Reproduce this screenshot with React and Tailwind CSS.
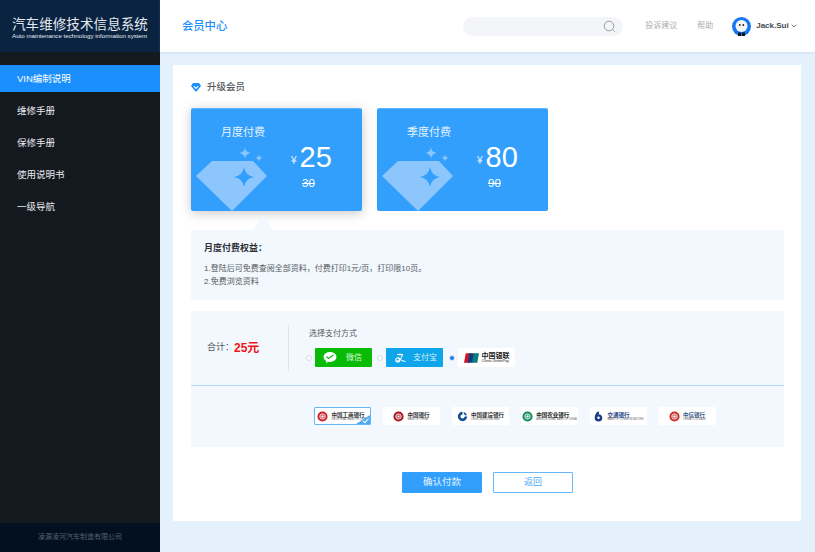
const font = { fontFamily: '"Liberation Sans", "Noto Sans CJK SC", sans-serif' };

const navItems = ['VIN编制说明', '维修手册', '保修手册', '使用说明书', '一级导航'];

function Star({ cx, cy, r, fill }) {
    const k = r * 0.14;
    return (
        <path
            fill={fill}
            d={`M${cx} ${cy - r}Q${cx + k} ${cy - k} ${cx + r} ${cy}Q${cx + k} ${cy + k} ${cx} ${cy + r}Q${cx - k} ${cy + k} ${cx - r} ${cy}Q${cx - k} ${cy - k} ${cx} ${cy - r}Z`}
        />
    );
}

function PriceCard({ title, price, oldPrice, active }) {
    return (
        <div className={`relative w-[171px] h-[103px] rounded-[2px] bg-[#339ffd] border-t border-[#5cb3fd] pt-[16px] text-white ${active ? 'shadow-[0_2px_12px_rgba(0,0,0,0.22)]' : ''}`}>
            <svg className="absolute left-0 top-0" width="171" height="103" viewBox="0 0 171 103">
                <polygon points="5,67 21,52 62,52 76,67 41,102" fill="#8cc6fd" />
                <Star cx={53} cy={68} r={10} fill="#339ffd" />
                <Star cx={54} cy={44} r={5.5} fill="#8cc6fd" />
                <Star cx={68} cy={49} r={3.5} fill="#8cc6fd" />
            </svg>
            <div className="relative pl-[30px] text-[11px] leading-[14px] text-[#e6f3ff]">{title}</div>
            <div className="relative ml-[100px] mt-[4px] flex items-end">
                <span className="text-[10px] leading-[12px] mb-[4px] mr-[3px] text-[#e6f3ff]">¥</span>
                <span className="text-[29px] leading-[28px]">{price}</span>
            </div>
            <div className="relative ml-[111px] mt-[5px] text-[11.5px] leading-[14px] line-through">{oldPrice}</div>
        </div>
    );
}

function Radio({ checked }) {
    return (
        <span className="w-[6px] h-[6px] rounded-full border border-[#d5dbe2] bg-white flex items-center justify-center shrink-0">
            {checked && <span className="w-[4px] h-[4px] rounded-full bg-[#1a7cf0]" />}
        </span>
    );
}

function BankEmblem({ color, kind }) {
    return (
        <svg width="11" height="11" viewBox="0 0 13 13" className="shrink-0">
            {kind === 'c' ? (
                <path d="M6.5 1a5.5 5.5 0 1 0 5.5 5.5H9a2.5 2.5 0 1 1-2.5-2.5zM8 1.2v2.2A3.5 3.5 0 0 1 9.6 5h2.2A5.5 5.5 0 0 0 8 1.2z" fill={color} />
            ) : kind === 'b' ? (
                <path d="M5 1h2.5L6.5 4A4 4 0 0 1 11 8a4.5 4.5 0 0 1-9 0c0-3 1.5-5 3-7zm1.5 5.5a1.5 1.5 0 1 0 0 3 1.5 1.5 0 0 0 0-3z" fill={color} />
            ) : (
                <>
                    <circle cx="6.5" cy="6.5" r="4.8" fill="none" stroke={color} strokeWidth="2.4" />
                    <rect x="4.7" y="4.7" width="3.6" height="3.6" fill="none" stroke={color} strokeWidth="1" />
                </>
            )}
        </svg>
    );
}

function BankLogo({ name, en, color, textColor, kind, selected }) {
    return (
        <div className={`relative w-[57px] h-[18px] rounded-[1px] bg-white flex items-center justify-center gap-[3px] ${selected ? 'border border-[#66b8f5]' : ''}`}>
            <BankEmblem color={color} kind={kind} />
            <div className="flex flex-col items-start">
                <span className="text-[5.5px] leading-[6px] font-bold whitespace-nowrap" style={{ color: textColor }}>{name}</span>
                <span className="text-[2.6px] leading-[3px] text-[#666] whitespace-nowrap">{en}</span>
            </div>
            {selected && (
                <svg className="absolute right-0 bottom-0" width="14" height="9" viewBox="0 0 14 9">
                    <polygon points="14,0 14,9 0,9" fill="#4fa9f0" />
                    <path d="M7 6l2 1.7L12.5 3.5" fill="none" stroke="#fff" strokeWidth="1.1" />
                </svg>
            )}
        </div>
    );
}

export default function App() {
    return (
        <div style={font} className="flex h-screen w-full overflow-hidden bg-[#e4f1fd]">
            {/* sidebar */}
            <aside className="w-[160px] shrink-0 flex flex-col bg-[#14181f]">
                <div className="h-[52px] bg-[#0a2341] pl-[12px] pt-[17px] text-[#e4e9ef]">
                    <div className="text-[13.6px] leading-[15px] whitespace-nowrap">汽车维修技术信息系统</div>
                    <div className="text-[6.2px] leading-[7px] whitespace-nowrap">Auto maintenance technology information system</div>
                </div>
                <nav className="flex-1 pt-[13px] flex flex-col gap-[5px]">
                    {navItems.map((item, i) => (
                        <div key={item} className={`h-[27px] pl-[17px] pt-[2px] flex items-center text-[9.5px] ${i === 0 ? 'bg-[#1a8efb] text-white' : 'text-[#e8ebef]'}`}>
                            {item}
                        </div>
                    ))}
                </nav>
                <div className="h-[29px] bg-[#03101f] flex items-center justify-center text-[7px] text-[#56606c]">
                    凌源凌河汽车制造有限公司
                </div>
            </aside>

            <div className="flex-1 min-w-0 flex flex-col">
                {/* header */}
                <header className="h-[52px] shrink-0 bg-white shadow-[0_1px_2px_rgba(120,170,220,0.25)] flex items-center pl-[22px]">
                    <div className="text-[11.3px] font-medium text-[#1a8efb]">会员中心</div>
                    <div className="ml-[236px] w-[160px] h-[19px] rounded-full bg-[#f3f5f9] flex items-center justify-end pr-[7px]">
                        <svg width="13" height="13" viewBox="0 0 13 13" fill="none" stroke="#8f959c" strokeWidth="0.9">
                            <circle cx="6" cy="6" r="4.8" />
                            <path d="M9.6 9.6l2.2 2.2" />
                        </svg>
                    </div>
                    <div className="ml-[22px] text-[8px] text-[#aaadb2]">投诉建议</div>
                    <div className="ml-[20px] text-[8px] text-[#aaadb2]">帮助</div>
                    <svg className="ml-[19px]" width="19" height="19" viewBox="0 0 19 19">
                        <circle cx="9.5" cy="9.5" r="9.5" fill="#1677f0" />
                        <circle cx="9.5" cy="9" r="6" fill="#f4f6f8" />
                        <circle cx="7.7" cy="8" r="0.9" fill="#222" />
                        <circle cx="11.3" cy="8" r="0.9" fill="#222" />
                        <path d="M6 19v-3.6h3V19zM10 19v-3.6h3V19z" fill="#111" />
                    </svg>
                    <div className="ml-[5px] text-[8px] font-bold text-[#444a52]">Jack.Sui</div>
                    <svg className="ml-[2px]" width="6" height="4" viewBox="0 0 6 4" fill="none" stroke="#555" strokeWidth="0.8">
                        <path d="M0.7 0.8L3 3l2.3-2.2" />
                    </svg>
                </header>

                {/* content */}
                <main className="flex-1 pl-[13px] pr-[14px] pt-[13px] pb-[31px]">
                    <div className="h-full bg-white pl-[18px] pr-[17px] pt-[15px]">
                        <div className="flex items-center h-[14px] text-[9.5px] font-medium text-[#555a60]">
                            <svg width="10" height="9" viewBox="0 0 10 9" className="mr-[6px]">
                                <path d="M2 0h6l2 3-5 6-5-6z" fill="#1a8efb" />
                                <path d="M2.8 3.2L5 5.4l2.2-2.2" fill="none" stroke="#fff" strokeWidth="1.1" />
                            </svg>
                            升级会员
                        </div>

                        <div className="mt-[14px] flex gap-[15px]">
                            <PriceCard title="月度付费" price="25" oldPrice="30" active />
                            <PriceCard title="季度付费" price="80" oldPrice="90" />
                        </div>

                        <div className="relative mt-[19px] h-[70px] bg-[#f2f8fe] pl-[13px] pt-[11px] rounded-[1px]">
                            <div className="absolute left-[62px] top-[-14px] w-0 h-0 border-x-[10px] border-b-[14px] border-x-transparent border-b-[#f2f8fe]" />
                            <div className="text-[9px] leading-[14px] font-bold text-[#2c3036]">{'月度付费权益\uFF1A'}</div>
                            <div className="mt-[7px] text-[8px] leading-[13px] text-[#555a60]">{'1.登陆后可免费查阅全部资料\uFF0C付费打印1元/页\uFF0C打印限10页\u3002'}</div>
                            <div className="text-[8px] leading-[13px] text-[#555a60]">2.免费浏览资料</div>
                        </div>

                        <div className="mt-[11px] h-[136px] bg-[#f2f8fe] flex flex-col">
                            <div className="h-[75px] pb-[1px] flex items-center border-b border-[#b5dcf9]">
                                <div className="w-[97px] shrink-0 pl-[16px] pt-[1px] flex items-center text-[9px] text-[#555a60]">
                                    {'合计\uFF1A'}<span className="text-[12px] font-bold text-[#f01414]">25元</span>
                                </div>
                                <div className="w-px h-[46px] bg-[#dfe3e7] shrink-0" />
                                <div className="pl-[20px]">
                                    <div className="text-[8px] leading-[12px] text-[#555a60]">选择支付方式</div>
                                    <div className="mt-[8px] flex items-center -ml-[3px]">
                                        <Radio />
                                        <div className="ml-[3px] w-[57px] h-[19px] rounded-[1px] bg-[#09bb07] flex items-center pl-[8px] text-[8px] text-[#d8f5d8]">
                                            <svg width="14" height="11" viewBox="0 0 14 11">
                                                <ellipse cx="7" cy="5" rx="6.5" ry="5" fill="#fff" />
                                                <path d="M3.5 9l-0.5 2 3-1.2z" fill="#fff" />
                                                <path d="M3.5 4.5l2 2L10.5 3" fill="none" stroke="#09bb07" strokeWidth="1.1" />
                                            </svg>
                                            <span className="ml-[9px]">微信</span>
                                        </div>
                                        <span className="ml-[5px]"><Radio /></span>
                                        <div className="ml-[3px] w-[57px] h-[19px] rounded-[1px] bg-[#0ea5ea] flex items-center pl-[9px] text-[8px] text-[#d6effb]">
                                            <svg width="11" height="10" viewBox="0 0 11 10" fill="none" stroke="#fff" strokeWidth="1.1">
                                                <path d="M2 1.5h6M5 0.5v2M7.5 1.5C7 4.5 4.5 7.5 1 8.5M3 4c1.5 2 4 4 7.5 4.5" />
                                                <circle cx="2.8" cy="7" r="2" />
                                            </svg>
                                            <span className="ml-[7px]">支付宝</span>
                                        </div>
                                        <span className="ml-[6px]"><Radio checked /></span>
                                        <div className="ml-[3px] w-[57px] h-[19px] rounded-[1px] bg-white flex items-center justify-center gap-[3px]">
                                            <svg width="15" height="10" viewBox="0 0 17 11">
                                                <path d="M2 0h6L6 11H0z" fill="#d3122a" />
                                                <path d="M6 0h6l-2 11H4z" fill="#0b3f7e" />
                                                <path d="M11 0h6l-2 11H9z" fill="#0e7a7a" />
                                            </svg>
                                            <div className="flex flex-col leading-none text-[#222]">
                                                <span className="text-[7px] leading-[7px] font-bold whitespace-nowrap">中国银联</span>
                                                <span className="text-[3.8px] leading-[4px] whitespace-nowrap">China UnionPay</span>
                                            </div>
                                        </div>
                                    </div>
                                </div>
                            </div>
                            <div className="pl-[123px] pt-[21px] flex gap-[12px]">
                                <BankLogo name="中国工商银行" en="INDUSTRIAL BANK OF CHINA" color="#c8202a" textColor="#333" selected />
                                <BankLogo name="中国银行" en="BANK OF CHINA" color="#a8141e" textColor="#333" />
                                <BankLogo name="中国建设银行" en="China Construction Bank" color="#0c4f96" textColor="#333" kind="c" />
                                <BankLogo name="中国农业银行" en="AGRICULTURAL BANK OF CHINA" color="#0b8a5c" textColor="#222" />
                                <BankLogo name="交通银行" en="BANK OF COMMUNICATIONS" color="#1b3f80" textColor="#1b3f80" kind="b" />
                                <BankLogo name="中信银行" en="CHINA CITIC BANK" color="#c9302c" textColor="#3a5a8a" />
                            </div>
                        </div>

                        <div className="mt-[25px] pl-[211px] flex gap-[11px]">
                            <button className="w-[80px] h-[21px] rounded-[1px] bg-[#339ffd] text-[9.5px] text-[#e6f3ff]">确认付款</button>
                            <button className="w-[80px] h-[21px] rounded-[1px] border border-[#66b8fd] bg-white text-[9px] text-[#4aa8f8]">返回</button>
                        </div>
                    </div>
                </main>
            </div>
        </div>
    );
}
